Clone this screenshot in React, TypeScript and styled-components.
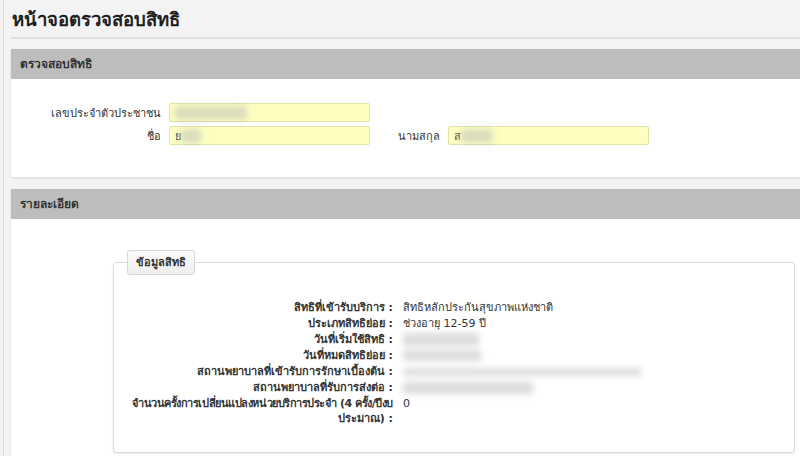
import React from 'react'
import styled, { createGlobalStyle } from 'styled-components'

const GlobalStyle = createGlobalStyle`
  html, body {
    margin: 0;
    padding: 0;
    background: #f3f3f3;
  }
  body {
    font-family: Tahoma, "DejaVu Sans", "Noto Sans", sans-serif;
    font-size: 12px;
    color: #333;
    overflow: hidden;
  }
`

const Page = styled.div`
  width: 800px;
  height: 456px;
  overflow: hidden;
  border-left: 1px solid #dcdcdc;
  margin-left: 3px;
  padding-left: 7px;
  box-sizing: border-box;
`

const Title = styled.h1`
  margin: 0;
  padding: 10px 0 7px 1px;
  font-size: 18.5px;
  font-weight: bold;
  color: #1e1e1e;
  line-height: 20px;
  border-bottom: 2px solid #dedede;
`

const Panel = styled.section`
  margin-top: ${({ $top }: { $top: number }) => $top}px;
  margin-right: -10px;
  background: #fff;
  box-shadow: 0 1px 2px rgba(0, 0, 0, 0.12);
`

const PanelHeader = styled.div`
  height: 30px;
  line-height: 30px;
  padding-left: 9px;
  background: #bdbdbd;
  font-weight: bold;
  font-size: 12px;
  color: #333;
`

const SearchBody = styled.div`
  padding: 24px 0 32px;
  display: grid;
  grid-template-columns: 150px 201px 62px 201px;
  column-gap: 8px;
  row-gap: 4px;
  align-items: center;
`

const FieldLabel = styled.label`
  text-align: right;
  font-size: 11px;
  color: #333;
`

const Field = styled.div`
  height: 19px;
  box-sizing: border-box;
  border: 1px solid #e2e2a8;
  border-radius: 2px;
  background: #fdffc0;
  padding: 0 5px;
  display: flex;
  align-items: center;
  font-size: 11px;
  color: #555;
`

const Blur = styled.span`
  display: inline-block;
  filter: blur(3px);
  background: rgba(185, 185, 185, 0.5);
  height: ${({ $h }: { $h?: number }) => $h ?? 12}px;
  width: ${({ $w }: { $w: number; $h?: number }) => $w}px;
  border-radius: 2px;
  vertical-align: middle;
`

const DetailBody = styled.div`
  height: 240px;
  padding: 31px 0 0 102px;
`

const Fieldset = styled.fieldset`
  margin: 0;
  width: 682px;
  box-sizing: border-box;
  height: 203px;
  border: 1px solid #dcdcdc;
  border-radius: 3px;
  padding: 25px 0 0 0;
  box-shadow: 0 1px 2px rgba(0, 0, 0, 0.1);
`

const Legend = styled.legend`
  margin-left: 13px;
  padding: 0 8px;
  height: 25px;
  line-height: 23px;
  box-sizing: border-box;
  border: 1px solid #d8d8d8;
  border-radius: 3px;
  background: linear-gradient(#fbfbfb, #efefef);
  font-weight: bold;
  font-size: 11px;
  color: #333;
`

const InfoGrid = styled.div`
  display: grid;
  grid-template-columns: 279px 1fr;
  column-gap: 10px;
  row-gap: 1px;
  line-height: 15px;
  font-size: 11px;
`

const InfoLabel = styled.div`
  text-align: right;
  font-weight: bold;
  color: #333;
`

const NoWrap = styled.span`
  white-space: nowrap;
  letter-spacing: -0.45px;
`

const InfoValue = styled.div`
  color: #333;
  display: flex;
  align-items: flex-start;
  min-height: 15px;
`

const BlurWrap = styled.div`
  display: flex;
  align-items: center;
  height: 15px;
`

const rows: { label: React.ReactNode; value: React.ReactNode }[] = [
  { label: 'สิทธิที่เข้ารับบริการ :', value: 'สิทธิหลักประกันสุขภาพแห่งชาติ' },
  { label: 'ประเภทสิทธิย่อย :', value: 'ช่วงอายุ 12-59 ปี' },
  { label: 'วันที่เริ่มใช้สิทธิ :', value: <BlurWrap><Blur $w={76} $h={13} /></BlurWrap> },
  { label: 'วันที่หมดสิทธิย่อย :', value: <BlurWrap><Blur $w={78} $h={11} /></BlurWrap> },
  { label: 'สถานพยาบาลที่เข้ารับการรักษาเบื้องต้น :', value: <BlurWrap><Blur $w={238} $h={8} /></BlurWrap> },
  { label: 'สถานพยาบาลที่รับการส่งต่อ :', value: <BlurWrap><Blur $w={130} $h={12} /></BlurWrap> },
  {
    label: <><NoWrap>จำนวนครั้งการเปลี่ยนแปลงหน่วยบริการประจำ (4 ครั้ง/ปีงบ</NoWrap><br />ประมาณ) :</>,
    value: '0'
  }
]

const App = () => {
  return (
    <>
      <GlobalStyle />
      <Page>
        <Title>หน้าจอตรวจสอบสิทธิ</Title>
        <Panel $top={10}>
          <PanelHeader>ตรวจสอบสิทธิ</PanelHeader>
          <SearchBody>
            <FieldLabel>เลขประจำตัวประชาชน</FieldLabel>
            <Field><Blur $w={72} $h={14} /></Field>
            <span />
            <span />
            <FieldLabel>ชื่อ</FieldLabel>
            <Field>ย<Blur $w={20} $h={14} /></Field>
            <FieldLabel>นามสกุล</FieldLabel>
            <Field>ส<Blur $w={32} $h={14} /></Field>
          </SearchBody>
        </Panel>
        <Panel $top={12}>
          <PanelHeader>รายละเอียด</PanelHeader>
          <DetailBody>
            <Fieldset>
              <Legend>ข้อมูลสิทธิ</Legend>
              <InfoGrid>
                { rows.map((row, i) => (
                  <React.Fragment key={ `row-${i}` }>
                    <InfoLabel>{ row.label }</InfoLabel>
                    <InfoValue>{ row.value }</InfoValue>
                  </React.Fragment>
                )) }
              </InfoGrid>
            </Fieldset>
          </DetailBody>
        </Panel>
      </Page>
    </>
  )
}

export default App
